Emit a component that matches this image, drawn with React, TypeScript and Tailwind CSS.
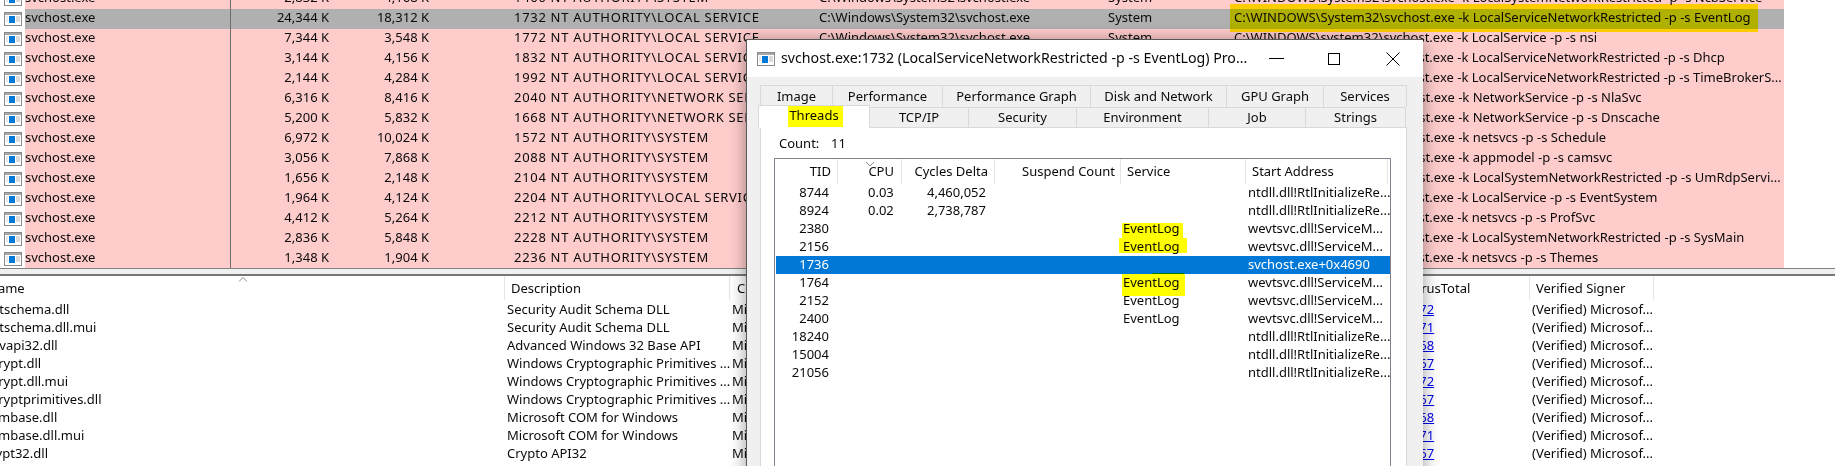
const FONT = "font-['Noto_Sans',sans-serif]"

const processRows = [
  ['2,832 K', '4,168 K', '1460 NT AUTHORITY\\SYSTEM', 'C:\\WINDOWS\\System32\\svchost.exe -k LocalSystemNetworkRestricted -p -s NcbService'],
  ['24,344 K', '18,312 K', '1732 NT AUTHORITY\\LOCAL SERVICE', 'C:\\WINDOWS\\System32\\svchost.exe -k LocalServiceNetworkRestricted -p -s EventLog'],
  ['7,344 K', '3,548 K', '1772 NT AUTHORITY\\LOCAL SERVICE', 'C:\\WINDOWS\\system32\\svchost.exe -k LocalService -p -s nsi'],
  ['3,144 K', '4,156 K', '1832 NT AUTHORITY\\LOCAL SERVICE', 'C:\\WINDOWS\\system32\\svchost.exe -k LocalServiceNetworkRestricted -p -s Dhcp'],
  ['2,144 K', '4,284 K', '1992 NT AUTHORITY\\LOCAL SERVICE', 'C:\\WINDOWS\\system32\\svchost.exe -k LocalServiceNetworkRestricted -p -s TimeBrokerS...'],
  ['6,316 K', '8,416 K', '2040 NT AUTHORITY\\NETWORK SERVICE', 'C:\\WINDOWS\\System32\\svchost.exe -k NetworkService -p -s NlaSvc'],
  ['5,200 K', '5,832 K', '1668 NT AUTHORITY\\NETWORK SERVICE', 'C:\\WINDOWS\\System32\\svchost.exe -k NetworkService -p -s Dnscache'],
  ['6,972 K', '10,024 K', '1572 NT AUTHORITY\\SYSTEM', 'C:\\WINDOWS\\System32\\svchost.exe -k netsvcs -p -s Schedule'],
  ['3,056 K', '7,868 K', '2088 NT AUTHORITY\\SYSTEM', 'C:\\WINDOWS\\System32\\svchost.exe -k appmodel -p -s camsvc'],
  ['1,656 K', '2,148 K', '2104 NT AUTHORITY\\SYSTEM', 'C:\\WINDOWS\\System32\\svchost.exe -k LocalSystemNetworkRestricted -p -s UmRdpServi...'],
  ['1,964 K', '4,124 K', '2204 NT AUTHORITY\\LOCAL SERVICE', 'C:\\WINDOWS\\system32\\svchost.exe -k LocalService -p -s EventSystem'],
  ['4,412 K', '5,264 K', '2212 NT AUTHORITY\\SYSTEM', 'C:\\WINDOWS\\system32\\svchost.exe -k netsvcs -p -s ProfSvc'],
  ['2,836 K', '5,848 K', '2228 NT AUTHORITY\\SYSTEM', 'C:\\WINDOWS\\system32\\svchost.exe -k LocalSystemNetworkRestricted -p -s SysMain'],
  ['1,348 K', '1,904 K', '2236 NT AUTHORITY\\SYSTEM', 'C:\\WINDOWS\\system32\\svchost.exe -k netsvcs -p -s Themes'],
]

const dllRows = [
  ['adtschema.dll', 'Security Audit Schema DLL', '0/72'],
  ['adtschema.dll.mui', 'Security Audit Schema DLL', '0/71'],
  ['advapi32.dll', 'Advanced Windows 32 Base API', '0/68'],
  ['bcrypt.dll', 'Windows Cryptographic Primitives ...', '0/67'],
  ['bcrypt.dll.mui', 'Windows Cryptographic Primitives ...', '0/72'],
  ['bcryptprimitives.dll', 'Windows Cryptographic Primitives ...', '0/67'],
  ['combase.dll', 'Microsoft COM for Windows', '0/68'],
  ['combase.dll.mui', 'Microsoft COM for Windows', '0/71'],
  ['crypt32.dll', 'Crypto API32', '0/67'],
]

const threadRows = [
  ['8744', '0.03', '4,460,052', '', 'ntdll.dll!RtlInitializeRe...'],
  ['8924', '0.02', '2,738,787', '', 'ntdll.dll!RtlInitializeRe...'],
  ['2380', '', '', 'EventLog', 'wevtsvc.dll!ServiceM...'],
  ['2156', '', '', 'EventLog', 'wevtsvc.dll!ServiceM...'],
  ['1736', '', '', '', 'svchost.exe+0x4690'],
  ['1764', '', '', 'EventLog', 'wevtsvc.dll!ServiceM...'],
  ['2152', '', '', 'EventLog', 'wevtsvc.dll!ServiceM...'],
  ['2400', '', '', 'EventLog', 'wevtsvc.dll!ServiceM...'],
  ['18240', '', '', '', 'ntdll.dll!RtlInitializeRe...'],
  ['15004', '', '', '', 'ntdll.dll!RtlInitializeRe...'],
  ['21056', '', '', '', 'ntdll.dll!RtlInitializeRe...'],
]

function ProcessIcon({ className }: { className?: string }) {
  return (
    <svg width="18" height="14" viewBox="0 0 18 14" className={className}>
      <rect x="0.5" y="0.5" width="17" height="13" fill="#fff" stroke="#8a8a8a" />
      <rect x="1" y="1" width="16" height="2" fill="#a8a8a8" />
      <rect x="5" y="4" width="6" height="7" fill="#0078d7" />
      <path d="M12 5h4M12 7h4M12 9h4" stroke="#b5b5b5" />
      <path d="M2 5h2M2 7h2M2 9h2" stroke="#d5d5d5" />
    </svg>
  )
}

function ProcessRow({ row, selected }: { row: string[]; selected: boolean }) {
  return (
    <div className="flex h-5 leading-[17px] w-[1784px]">
      <div className="flex h-5 w-[25px] shrink-0 items-center bg-white pl-1">
        <ProcessIcon />
      </div>
      <div className={`flex min-w-0 flex-1 overflow-hidden whitespace-nowrap ${selected ? 'bg-[#b0b0b0]' : 'bg-[#ffcccc]'}`}>
        <div className="w-[206px] shrink-0 border-r border-[#6e6e6e]">svchost.exe</div>
        <div className="w-[98px] shrink-0 text-right">{row[0]}</div>
        <div className="w-[100px] shrink-0 text-right">{row[1]}</div>
        <div className="ml-[85px] w-[305px] shrink-0 overflow-hidden tracking-[0.7px]">{row[2]}</div>
        <div className="w-[289px] shrink-0">C:\Windows\System32\svchost.exe</div>
        <div className="w-[126px] shrink-0">System</div>
        <div className="shrink-0">{row[3]}</div>
      </div>
    </div>
  )
}

function ProcessPane() {
  return (
    <div className="relative h-[268px] overflow-hidden">
      <div className="-mt-[11px]">
        {processRows.map((row, i) => (
          <ProcessRow key={row[2]} row={row} selected={i === 1} />
        ))}
      </div>
      {/* marker pen over the command line */}
      <div className="absolute left-[1230px] top-1 h-7 w-[528px] bg-[#ffff00] mix-blend-multiply" />
    </div>
  )
}

function DllPane() {
  return (
    <div className="flex-1 overflow-hidden">
      <div className="relative flex h-6 leading-6">
        <div className="flex h-6 w-[505px] shrink-0 overflow-hidden border-r border-[#e5e5e5]">
          <span className="-ml-[12px]">Name</span>
        </div>
        <div className="h-6 w-[225px] shrink-0 border-r border-[#e5e5e5] pl-[6px]">Description</div>
        <div className="h-6 w-[673px] shrink-0 pl-[7px]">Company Name</div>
        <div className="h-6 w-[127px] shrink-0 border-r border-[#e5e5e5] pl-[7px]">VirusTotal</div>
        <div className="h-6 w-[124px] shrink-0 border-r border-[#e5e5e5] pl-[6px]">Verified Signer</div>
        <svg width="10" height="6" viewBox="0 0 10 6" className="absolute left-[238px] top-0">
          <path d="M1 5.5L5 1.5L9 5.5" fill="none" stroke="#8a8a8a" />
        </svg>
      </div>
      {dllRows.map(row => (
        <div key={row[0]} className="flex h-[18px] leading-[18px] whitespace-nowrap">
          <div className="w-[505px] shrink-0 overflow-hidden">
            <span className="-ml-[16px] block">{row[0]}</span>
          </div>
          <div className="w-[225px] shrink-0 pl-[2px]">{row[1]}</div>
          <div className="w-[673px] shrink-0 pl-[2px]">Microsoft Corporation</div>
          <div className="w-[127px] shrink-0 pl-[4px] text-[#0000ee] underline">{row[2]}</div>
          <div className="w-[124px] shrink-0 pl-[2px]">(Verified) Microsof...</div>
        </div>
      ))}
    </div>
  )
}

function Tab({ label, width }: { label: string; width: string }) {
  return (
    <div className={`flex h-full shrink-0 items-center justify-center border-t border-r border-[#d9d9d9] ${width}`}>{label}</div>
  )
}

function ThreadList() {
  return (
    <div className="relative mt-[4px] ml-[13px] h-[360px] w-[617px] border border-[#82828c]">
      <div className="flex h-[25px] items-center">
        <div className="flex h-full w-[63px] items-center justify-end border-r border-[#e5e5e5] pr-[6px]">TID</div>
        <div className="flex h-full w-[64px] items-center justify-end border-r border-[#e5e5e5] pr-[7px]">CPU</div>
        <div className="flex h-full w-[93px] items-center justify-end border-r border-[#e5e5e5] pr-[6px]">Cycles Delta</div>
        <div className="flex h-full w-[126px] items-center justify-end border-r border-[#e5e5e5] pr-[5px]">Suspend Count</div>
        <div className="flex h-full w-[125px] items-center border-r border-[#e5e5e5] pl-[6px]">Service</div>
        <div className="flex h-full w-[142px] items-center border-r border-[#e5e5e5] pl-[6px]">Start Address</div>
      </div>
      <svg width="10" height="6" viewBox="0 0 10 6" className="absolute left-[90px] top-[2px]">
        <path d="M1 1L5 5L9 1" fill="none" stroke="#8a8a8a" />
      </svg>
      {threadRows.map(row => (
        <div
          key={row[0]}
          className={`flex h-[18px] w-[614px] ml-px leading-[16px] whitespace-nowrap ${row[0] === '1736' ? 'bg-[#0078d7] text-white' : ''}`}
        >
          <div className="w-[62px] text-right pr-[9px]">{row[0]}</div>
          <div className="w-[64px] pl-[30px]">{row[1]}</div>
          <div className="w-[93px] text-right pr-[9px]">{row[2]}</div>
          <div className="w-[126px]" />
          <div className="w-[125px] pl-[2px]">{row[3]}</div>
          <div className="w-[142px] pl-[2px]">{row[4]}</div>
        </div>
      ))}
      {/* marker pen over the EventLog cells */}
      <div className="absolute left-[347px] top-[64px] h-[15px] w-[61px] bg-[#ffff00] mix-blend-multiply" />
      <div className="absolute left-[344px] top-[79px] h-[15px] w-[68px] bg-[#ffff00] mix-blend-multiply" />
      <div className="absolute left-[377px] top-[114px] h-px w-[32px] bg-[#ffff00] mix-blend-multiply" />
      <div className="absolute left-[347px] top-[115px] h-[22px] w-[63px] bg-[#ffff00] mix-blend-multiply" />
    </div>
  )
}

function PropertiesDialog() {
  return (
    <div className="absolute left-[746px] top-[39px] z-20 h-[440px] w-[677px] border-t border-l border-[#5a5a5a] bg-[#f0f0f0] shadow-[0_2px_16px_rgba(0,0,0,0.4)]">
      <div className="flex h-[37px] items-center bg-white">
        <ProcessIcon className="ml-[10px]" />
        <span className="ml-[6px] -mt-px text-[14.2px] whitespace-nowrap">svchost.exe:1732 (LocalServiceNetworkRestricted -p -s EventLog) Pro...</span>
        <div className="absolute left-[522px] top-[18px] h-px w-[15px] bg-black" />
        <div className="absolute left-[581px] top-[13px] h-3 w-3 border border-black" />
        <svg width="14" height="14" viewBox="0 0 14 14" className="absolute left-[639px] top-[12px]">
          <path d="M0.5 0.5L13.5 13.5M13.5 0.5L0.5 13.5" stroke="#000" />
        </svg>
      </div>

      <div className="pt-[8px] pl-[13px]">
        <div className="flex h-[22px] w-[646px] border-l border-[#d9d9d9]">
          <Tab label="Image" width="w-[72px]" />
          <Tab label="Performance" width="w-[110px]" />
          <Tab label="Performance Graph" width="w-[148px]" />
          <Tab label="Disk and Network" width="w-[136px]" />
          <Tab label="GPU Graph" width="w-[97px]" />
          <Tab label="Services" width="w-[83px]" />
        </div>
        <div className="-ml-[2px] flex h-5 w-[648px]">
          <div className="relative z-10 -mt-[2px] flex h-[23px] w-[112px] shrink-0 items-center justify-center border-x border-t border-[#d9d9d9] bg-white pb-[3px]">
            Threads
            <div className="absolute left-[29px] top-0 h-[21px] w-[55px] bg-[#ffff00] mix-blend-multiply" />
          </div>
          <Tab label="TCP/IP" width="w-[99px]" />
          <Tab label="Security" width="w-[108px]" />
          <Tab label="Environment" width="w-[132px]" />
          <Tab label="Job" width="w-[97px]" />
          <Tab label="Strings" width="w-[100px]" />
        </div>
        <div className="h-[400px] w-[647px] border border-[#d9d9d9] bg-white pt-[6px]">
          <div className="ml-[18px] flex h-[20px] items-center">
            <span className="w-[52px]">Count:</span>
            <span>11</span>
          </div>
          <ThreadList />
        </div>
      </div>
    </div>
  )
}

export default function App() {
  return (
    <div className={`relative h-[466px] w-[1835px] overflow-hidden bg-white text-[13px] text-[#0a0a0a] ${FONT}`}>
      <div className="flex h-full flex-col">
        <ProcessPane />
        <div className="h-[8px] shrink-0 border-t border-b-2 border-t-[#808080] border-b-[#777777] bg-[#f0f0f0]" />
        <DllPane />
      </div>
      <PropertiesDialog />
    </div>
  )
}
